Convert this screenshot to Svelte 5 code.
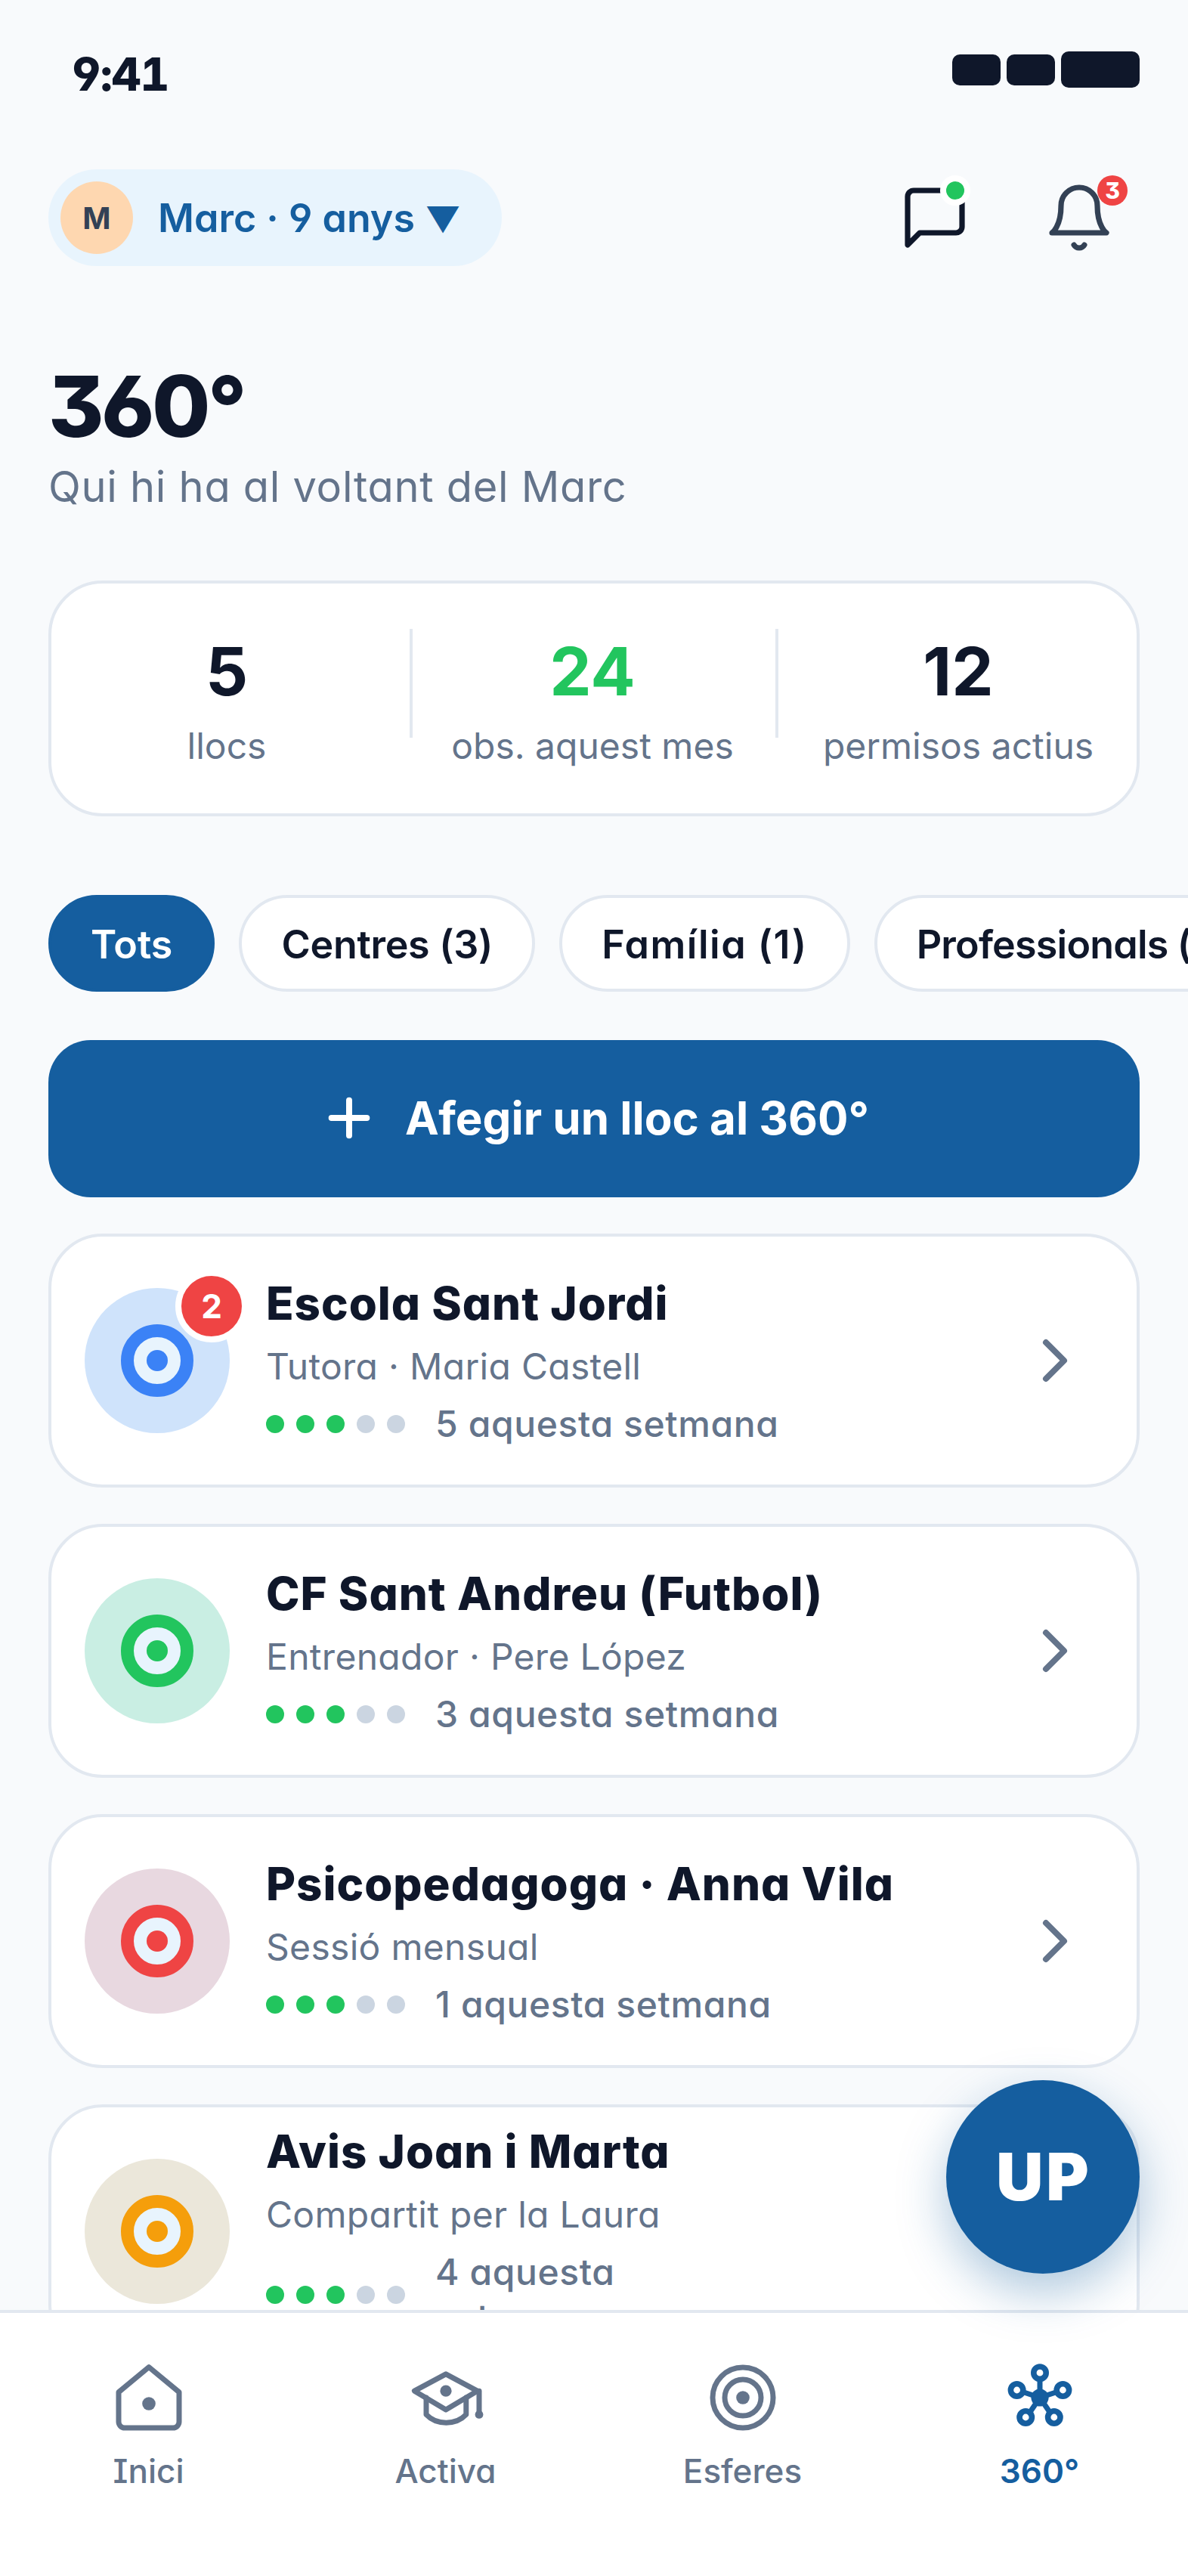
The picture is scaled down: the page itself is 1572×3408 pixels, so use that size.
<script>
  const stats = [
    { value: '5', label: 'llocs' },
    { value: '24', label: 'obs. aquest mes', green: true },
    { value: '12', label: 'permisos actius' }
  ]
  const chips = [
    { label: 'Tots', spacing: 0 },
    { label: 'Centres (3)', spacing: -0.3 },
    { label: 'Família (1)', spacing: 1.5 },
    { label: 'Professionals (1)', spacing: -0.8 }
  ]
  const places = [
    { name: 'Escola Sant Jordi', sub: 'Tutora · Maria Castell', meta: ['5 aquesta setmana'], tint: '#cfe3fb', ring: '#3b82f6', badge: 2 },
    { name: 'CF Sant Andreu (Futbol)', sub: 'Entrenador · Pere López', meta: ['3 aquesta setmana'], tint: '#c9eee3', ring: '#22c55e' },
    { name: 'Psicopedagoga · Anna Vila', sub: 'Sessió mensual', meta: ['1 aquesta setmana'], tint: '#e8d8e0', ring: '#ef4444' },
    { name: 'Avis Joan i Marta', sub: 'Compartit per la Laura', meta: ['4 aquesta', 'setmana'], tint: '#ebe7da', ring: '#f59e0b' }
  ]
  const dots = [1, 1, 1, 0, 0]
</script>

<div class="phone">
  <div class="scroll">
    <div class="status">
      <span class="time">9:41</span>
      <div class="signals">
        <i class="sig"></i>
        <i class="sig"></i>
        <i class="sig big"></i>
      </div>
    </div>

    <header class="top">
      <div class="profile">
        <span class="avatar">M</span>
        <span class="who">Marc · 9 anys <small>▼</small></span>
      </div>
      <div class="top-icons">
        <div class="ic">
          <svg viewBox="0 0 24 24" class="chat"><path d="M21 15a2 2 0 0 1-2 2H7l-4 4V5a2 2 0 0 1 2-2h14a2 2 0 0 1 2 2z" /></svg>
          <span class="online"></span>
        </div>
        <div class="ic">
          <svg viewBox="0 0 24 24" class="bell"><path d="M6 8a6 6 0 0 1 12 0c0 7 3 9 3 9H3s3-2 3-9" /><path d="M13.73 21a2 2 0 0 1-3.46 0" /></svg>
          <span class="count">3</span>
        </div>
      </div>
    </header>

    <section class="hero">
      <h1>360°</h1>
      <p>Qui hi ha al voltant del Marc</p>
    </section>

    <section class="stats">
      {#each stats as s, i}
        {#if i > 0}<span class="divider"></span>{/if}
        <div class="stat">
          <strong class:green={s.green}>{s.value}</strong>
          <span>{s.label}</span>
        </div>
      {/each}
    </section>

    <nav class="chips">
      {#each chips as c, i}
        <button class="chip" class:active={i === 0} style="letter-spacing:{c.spacing}px">{c.label}</button>
      {/each}
    </nav>

    <button class="add">
      <svg viewBox="0 0 24 24"><path d="M12 5v14M5 12h14" /></svg>
      Afegir un lloc al 360°
    </button>

    <div class="list">
      {#each places as p}
        <article class="card">
          <div class="logo" style="background:{p.tint}">
            <span class="target" style="border-color:{p.ring}"><b style="background:{p.ring}"></b></span>
            {#if p.badge}<span class="logo-badge">{p.badge}</span>{/if}
          </div>
          <div class="info">
            <h2>{p.name}</h2>
            <p>{p.sub}</p>
            <div class="meta">
              <div class="dots">
                {#each dots as d}<i class:on={d}></i>{/each}
              </div>
              <span>{#each p.meta as line, i}{#if i > 0}<br />{/if}{line}{/each}</span>
            </div>
          </div>
          <svg class="chev" viewBox="0 0 24 24"><path d="M9 18l6-6-6-6" /></svg>
        </article>
      {/each}
    </div>
  </div>

  <button class="fab">UP</button>

  <footer class="tabs">
    <div class="tab">
      <svg viewBox="0 0 24 24"><path d="M2 10.2 12 1.9l10 8.3V20a2 2 0 0 1-2 2H4a2 2 0 0 1-2-2z" /><circle class="fill" cx="12" cy="14" r="2.2" /></svg>
      <span>Inici</span>
    </div>
    <div class="tab">
      <svg viewBox="0 0 24 24"><path d="M12 4.2 1.6 9.8 12 16l10.4-6.2z" /><path d="M5.5 12v5.6c3.4 3.6 9.8 3.6 13.2 0V12" /><path d="M23 9.8v7" /><circle class="fill" cx="12" cy="9.8" r="1.9" /><circle class="fill" cx="23" cy="17.6" r="1.35" /></svg>
      <span>Activa</span>
    </div>
    <div class="tab">
      <svg viewBox="0 0 24 24"><circle cx="12" cy="12" r="10" /><circle cx="12" cy="12" r="6" /><circle class="fill" cx="12" cy="12" r="2.2" /></svg>
      <span>Esferes</span>
    </div>
    <div class="tab current">
      <svg viewBox="0 0 24 24">
        <path d="M12 12V5.5M12 12 6 10M12 12l6-2M12 12l-3.4 5M12 12l3.4 5" />
        <circle class="fill" cx="12" cy="12" r="2.9" />
        <circle class="sat" cx="12" cy="3.8" r="2.05" />
        <circle class="sat" cx="4.4" cy="9.5" r="2.05" />
        <circle class="sat" cx="19.6" cy="9.5" r="2.05" />
        <circle class="sat" cx="7.3" cy="18.5" r="2.05" />
        <circle class="sat" cx="16.7" cy="18.5" r="2.05" />
      </svg>
      <span>360°</span>
    </div>
  </footer>
</div>

<style>
  :global(body) {
    margin: 0;
    background: #f8fafc;
  }

  .phone {
    position: relative;
    width: 1572px;
    height: 3408px;
    display: flex;
    flex-direction: column;
    overflow: hidden;
    background: #f8fafc;
    color: #0f172a;
    font-family: Inter, "Liberation Sans", sans-serif;
    font-feature-settings: "cv11", "cv08";
  }

  .scroll {
    height: 3056px;
    flex: none;
    overflow: hidden;
    padding: 0 64px;
    box-sizing: border-box;
  }

  /* status bar */
  .status {
    height: 192px;
    display: flex;
    justify-content: space-between;
    align-items: flex-start;
    padding: 64px 0 0 31px;
    box-sizing: border-box;
  }

  .time {
    font-size: 60px;
    font-weight: 800;
    line-height: 68px;
    font-feature-settings: "tnum", "cv04";
    letter-spacing: -1px;
  }

  .signals {
    display: flex;
    gap: 8px;
    align-items: center;
    height: 48px;
    margin-top: 4px;
  }

  .sig {
    width: 64px;
    height: 41px;
    border-radius: 10px;
    background: #0f172a;
  }

  .sig.big {
    width: 104px;
    height: 48px;
  }

  /* header */
  .top {
    margin-top: 32px;
    display: flex;
    justify-content: space-between;
    align-items: center;
    height: 128px;
  }

  .profile {
    display: flex;
    align-items: center;
    gap: 33px;
    height: 128px;
    padding: 0 54px 0 16px;
    border-radius: 64px;
    background: #e8f4fd;
  }

  .avatar {
    width: 96px;
    height: 96px;
    border-radius: 50%;
    background: #fed7b0;
    color: #334155;
    font-size: 40px;
    font-weight: 700;
    display: flex;
    align-items: center;
    justify-content: center;
  }

  .who {
    font-size: 52px;
    font-weight: 600;
    color: #155e9f;
    font-feature-settings: "cv11", "cv04";
  }

  .who small {
    font-size: 46px;
  }

  .top-icons {
    display: flex;
    gap: 95px;
    margin-right: 32px;
  }

  .ic {
    position: relative;
    width: 96px;
    height: 96px;
  }

  .ic svg {
    width: 96px;
    height: 96px;
    display: block;
    fill: none;
    stroke-linecap: round;
    stroke-linejoin: round;
    stroke-width: 1.8;
  }

  .chat { stroke: #0f172a; }
  .bell { stroke: #334155; }

  .online {
    position: absolute;
    top: -8px;
    right: 1px;
    width: 24px;
    height: 24px;
    border-radius: 50%;
    background: #22c55e;
    border: 8px solid #fff;
    box-sizing: content-box;
  }

  .count {
    position: absolute;
    top: -8px;
    right: -16px;
    width: 40px;
    height: 40px;
    border-radius: 50%;
    background: #ef4444;
    color: #fff;
    font-size: 30px;
    font-weight: 800;
    display: flex;
    align-items: center;
    justify-content: center;
    font-feature-settings: "cv09";
  }

  /* title */
  .hero {
    margin-top: 118px;
    height: 298px;
  }

  h1 {
    margin: 0;
    font-size: 112px;
    line-height: 134px;
    font-weight: 800;
    font-feature-settings: "cv09", "cv03";
    letter-spacing: -3.5px;
  }

  .hero p {
    margin: 4px 0 0;
    font-size: 56px;
    line-height: 72px;
    letter-spacing: 0.7px;
    color: #64748b;
  }

  /* stats card */
  .stats {
    height: 312px;
    box-sizing: border-box;
    padding-top: 62px;
    display: flex;
    justify-content: center;
    align-items: flex-start;
    background: #fff;
    border: 4px solid #e2e8f0;
    border-radius: 72px;
  }

  .stat {
    width: 468px;
    box-sizing: border-box;
    padding-right: 4px;
    display: flex;
    flex-direction: column;
    align-items: center;
  }

  .stat strong {
    font-size: 88px;
    line-height: 108px;
    font-weight: 700;
    font-feature-settings: normal;
  }

  .stat strong.green { color: #22c55e; }

  .stat span {
    margin-top: 16px;
    font-size: 48px;
    line-height: 58px;
    color: #64748b;
    font-feature-settings: normal;
  }

  .divider {
    flex: none;
    width: 4px;
    height: 144px;
    margin: -2px 6px 0;
    background: #e2e8f0;
  }

  /* filter chips */
  .chips {
    margin-top: 104px;
    display: flex;
    gap: 32px;
    height: 128px;
    width: 1700px;
  }

  .chip {
    flex: none;
    height: 128px;
    padding: 2px 52px 0;
    border: 4px solid #e2e8f0;
    border-radius: 64px;
    background: #fff;
    color: #0f172a;
    font-family: inherit;
    font-feature-settings: inherit;
    font-size: 52px;
    font-weight: 600;
    white-space: nowrap;
  }

  .chip.active {
    background: #155e9f;
    border-color: #155e9f;
    color: #fff;
  }

  /* add button */
  .add {
    margin-top: 64px;
    width: 100%;
    height: 208px;
    padding: 0 0 2px;
    display: flex;
    align-items: center;
    justify-content: center;
    gap: 34px;
    border: 0;
    border-radius: 56px;
    background: #155e9f;
    color: #fff;
    font-family: inherit;
    font-feature-settings: normal;
    font-size: 60px;
    font-weight: 700;
  }

  .add svg {
    width: 80px;
    height: 80px;
    fill: none;
    stroke: #fff;
    stroke-width: 2.4;
    stroke-linecap: round;
  }

  /* place cards */
  .list {
    margin-top: 48px;
    display: flex;
    flex-direction: column;
    gap: 48px;
  }

  .card {
    flex: none;
    height: 336px;
    box-sizing: border-box;
    display: flex;
    align-items: center;
    padding: 0 60px 0 44px;
    background: #fff;
    border: 4px solid #e2e8f0;
    border-radius: 72px;
  }

  .logo {
    position: relative;
    flex: none;
    width: 192px;
    height: 192px;
    border-radius: 50%;
    display: flex;
    align-items: center;
    justify-content: center;
  }

  .target {
    width: 96px;
    height: 96px;
    box-sizing: border-box;
    border-radius: 50%;
    border: 17px solid;
    background: #e8f4fd;
    display: flex;
    align-items: center;
    justify-content: center;
  }

  .target b {
    width: 28px;
    height: 28px;
    border-radius: 50%;
  }

  .logo-badge {
    position: absolute;
    top: -16px;
    right: -16px;
    width: 80px;
    height: 80px;
    box-sizing: content-box;
    border: 8px solid #fff;
    margin: -8px;
    border-radius: 50%;
    background: #ef4444;
    color: #fff;
    font-size: 44px;
    font-weight: 700;
    display: flex;
    align-items: center;
    justify-content: center;
    font-feature-settings: normal;
  }

  .info {
    flex: 1;
    margin-left: 48px;
    min-width: 0;
  }

  h2 {
    margin: 0;
    font-size: 60px;
    line-height: 76px;
    font-weight: 800;
    letter-spacing: 1px;
    white-space: nowrap;
  }

  .info p {
    margin: 12px 0 0;
    font-size: 48px;
    line-height: 68px;
    letter-spacing: 0.3px;
    color: #64748b;
  }

  .meta {
    margin-top: 12px;
    display: flex;
    align-items: center;
    gap: 40px;
    font-size: 48px;
    line-height: 60px;
    letter-spacing: 0.6px;
    font-weight: 500;
    color: #64748b;
  }

  .dots {
    display: flex;
    gap: 16px;
  }

  .dots i {
    width: 24px;
    height: 24px;
    border-radius: 50%;
    background: #cbd5e1;
  }

  .dots i.on { background: #22c55e; }

  .chev {
    flex: none;
    width: 96px;
    height: 96px;
    fill: none;
    stroke: #64748b;
    stroke-width: 2;
    stroke-linecap: round;
    stroke-linejoin: round;
  }

  /* floating button */
  .fab {
    position: absolute;
    right: 64px;
    bottom: 400px;
    z-index: 2;
    width: 256px;
    height: 256px;
    padding: 0 0 0 3px;
    border: 0;
    border-radius: 50%;
    background: #155e9f;
    color: #fff;
    font-family: inherit;
    font-size: 86px;
    font-weight: 900;
    letter-spacing: 4px;
    box-shadow: 0 24px 64px rgba(21, 94, 159, 0.35);
  }

  /* bottom tabs */
  .tabs {
    flex: 1;
    display: flex;
    background: #fff;
    border-top: 4px solid #e2e8f0;
    padding-top: 64px;
    box-sizing: border-box;
  }

  .tab {
    flex: 1;
    display: flex;
    flex-direction: column;
    align-items: center;
    color: #64748b;
    font-size: 44px;
    font-weight: 500;
    line-height: 54px;
  }

  .tab svg {
    width: 96px;
    height: 96px;
    margin-bottom: 22px;
    fill: none;
    stroke: #64748b;
    stroke-width: 1.75;
    stroke-linecap: round;
    stroke-linejoin: round;
    overflow: visible;
  }

  .tab svg .fill {
    fill: #64748b;
    stroke: none;
  }

  .tab.current {
    color: #155e9f;
    font-weight: 600;
  }

  .tab.current svg { stroke: #155e9f; }
  .tab.current svg .fill { fill: #155e9f; }
  .tab.current svg .sat { fill: #fff; stroke-width: 1.9; }
</style>
